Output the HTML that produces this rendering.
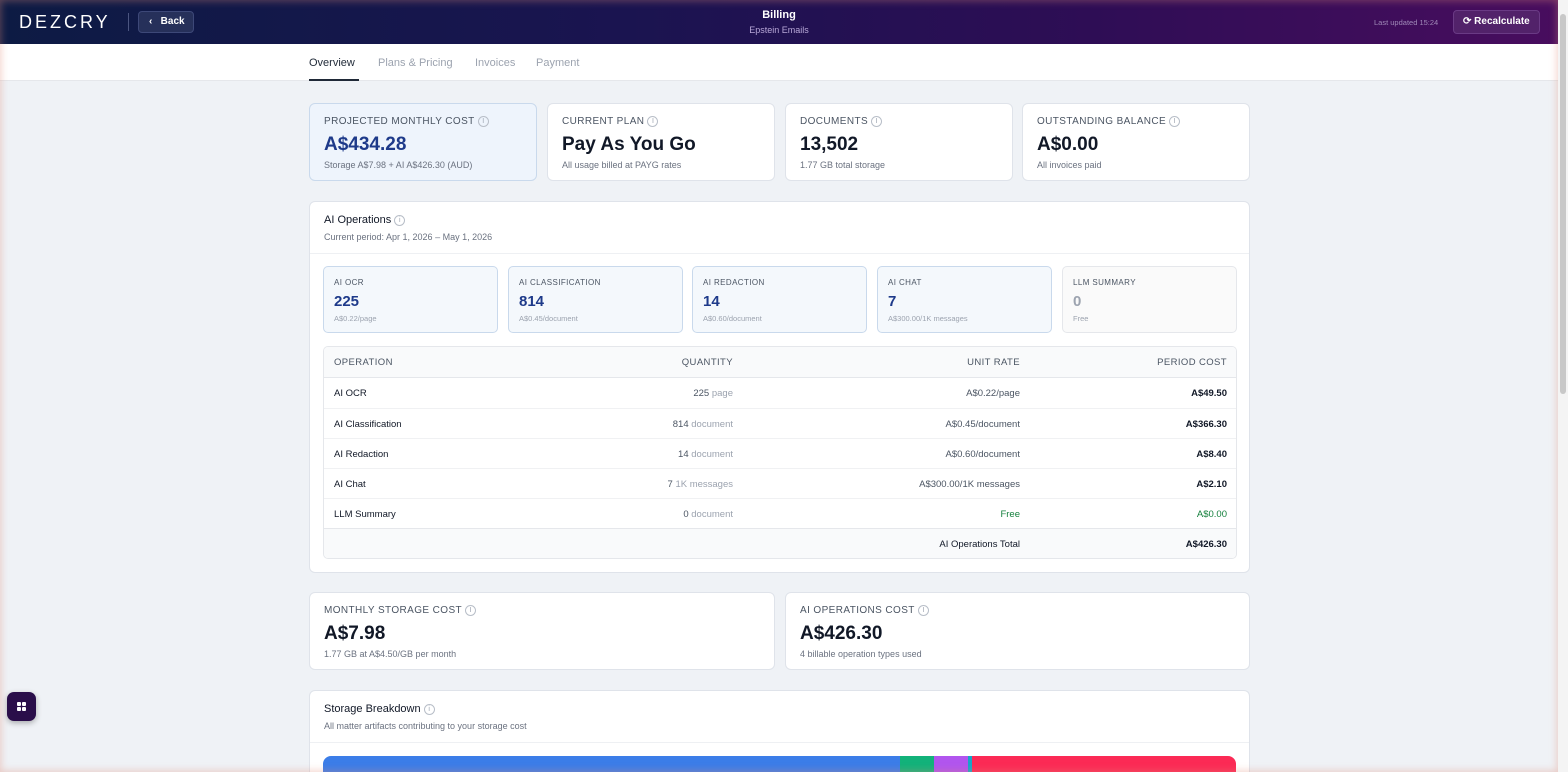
<!DOCTYPE html>
<html style="overflow:hidden;height:772px"><head><meta charset="utf-8"><style>
*{box-sizing:border-box;margin:0;padding:0}
body{width:1568px;height:772px;overflow:hidden;background:#eff2f6;font-family:"Liberation Sans",sans-serif;color:#111827;position:relative}
.hdr{position:absolute;left:0;top:0;width:1558px;height:44px;background:linear-gradient(90deg,#0d1b44 0%,#1a1450 40%,#2e0d55 70%,#480d5e 100%)}
.tabs{position:absolute;left:0;top:44px;width:1558px;height:37px;background:#fff;border-bottom:1px solid #e5e7eb}
.tab{position:absolute;top:13px;font-size:11px;color:#9ca3af}
.card{position:absolute;background:#fff;border:1px solid #dfe3ea;border-radius:6px}
.lbl{font-size:10px;letter-spacing:.4px;color:#4b5563;text-transform:uppercase;position:absolute;left:14px;top:12px}
.i{display:inline-block;width:11px;height:11px;border:1px solid #b8bec8;border-radius:50%;font-size:7px;line-height:9px;text-align:center;color:#9ca3af;vertical-align:1px;margin-left:3px;letter-spacing:0}
.big{position:absolute;left:14px;top:30px;font-size:19px;font-weight:bold}
.sub{position:absolute;left:14px;top:56px;font-size:9px;color:#6b7280}
.mini{position:absolute;top:266px;width:175px;height:67px;border:1px solid #c9d9ec;background:#f4f8fc;border-radius:5px}
.mini .t{position:absolute;left:10px;top:11px;font-size:8px;letter-spacing:.4px;color:#4b5563}
.mini .n{position:absolute;left:10px;top:26px;font-size:15px;font-weight:bold;color:#1e3a8a}
.mini .r{position:absolute;left:10px;top:47px;font-size:7.5px;color:#9ca3af}
.row{position:absolute;left:0;width:913px;height:30px;border-top:1px solid #f0f1f3;font-size:9.5px}
.row span{position:absolute;top:10px}
.c1{left:10px}.c2{right:504px}.c3{right:217px}.c4{right:10px;font-weight:bold}
.g{color:#9ca3af}
</style></head><body>
<div class="hdr">
 <div style="position:absolute;left:19px;top:12px;font-size:18px;color:#fff;letter-spacing:3px">DEZCRY</div>
 <div style="position:absolute;left:128px;top:13px;width:1px;height:18px;background:#4b5580"></div>
 <div style="position:absolute;left:138px;top:11px;width:56px;height:22px;border:1px solid #3d4878;background:#26305a;border-radius:4px;color:#fff;font-size:10px;font-weight:bold;line-height:20px;padding-left:10px">‹&nbsp;&nbsp;&nbsp;Back</div>
 <div style="position:absolute;left:0;width:1558px;top:9px;text-align:center;color:#fff;font-weight:bold;font-size:11px">Billing</div>
 <div style="position:absolute;left:0;width:1558px;top:25px;text-align:center;color:#b8a8d8;font-size:9px">Epstein Emails</div>
 <div style="position:absolute;left:1374px;top:18px;color:#a08ab8;font-size:7.5px">Last updated 15:24</div>
 <div style="position:absolute;left:1453px;top:10px;width:87px;height:24px;border:1px solid #6a3a85;background:#52226a;border-radius:4px;color:#fff;font-size:10px;font-weight:bold;line-height:22px;padding-left:9px">⟳ Recalculate</div>
</div>
<div class="tabs">
 <div class="tab" style="left:309px;color:#1f2937">Overview</div>
 <div style="position:absolute;left:309px;top:35px;width:50px;height:2px;background:#1f2937"></div>
 <div class="tab" style="left:378px">Plans &amp; Pricing</div>
 <div class="tab" style="left:475px">Invoices</div>
 <div class="tab" style="left:536px">Payment</div>
</div>

<div class="card" style="left:309px;top:103px;width:228px;height:78px;background:#eef4fc;border-color:#c9d9ec"><div class="lbl">Projected monthly cost<span class="i">i</span></div><div class="big" style="color:#1e3a8a">A$434.28</div><div class="sub">Storage A$7.98 + AI A$426.30 (AUD)</div></div>
<div class="card" style="left:547px;top:103px;width:228px;height:78px"><div class="lbl">Current plan<span class="i">i</span></div><div class="big">Pay As You Go</div><div class="sub">All usage billed at PAYG rates</div></div>
<div class="card" style="left:785px;top:103px;width:228px;height:78px"><div class="lbl">Documents<span class="i">i</span></div><div class="big">13,502</div><div class="sub">1.77 GB total storage</div></div>
<div class="card" style="left:1022px;top:103px;width:228px;height:78px"><div class="lbl">Outstanding balance<span class="i">i</span></div><div class="big">A$0.00</div><div class="sub">All invoices paid</div></div>

<div class="card" style="left:309px;top:201px;width:941px;height:372px">
 <div style="position:absolute;left:14px;top:12px;font-size:11px">AI Operations<span class="i">i</span></div>
 <div style="position:absolute;left:14px;top:30px;font-size:9px;color:#6b7280">Current period: Apr 1, 2026 – May 1, 2026</div>
 <div style="position:absolute;left:0;top:51px;width:939px;height:1px;background:#eef0f3"></div>
</div>
<div class="mini" style="left:323px"><div class="t">AI OCR</div><div class="n">225</div><div class="r">A$0.22/page</div></div>
<div class="mini" style="left:508px"><div class="t">AI CLASSIFICATION</div><div class="n">814</div><div class="r">A$0.45/document</div></div>
<div class="mini" style="left:692px"><div class="t">AI REDACTION</div><div class="n">14</div><div class="r">A$0.60/document</div></div>
<div class="mini" style="left:877px"><div class="t">AI CHAT</div><div class="n">7</div><div class="r">A$300.00/1K messages</div></div>
<div class="mini" style="left:1062px;background:#fafafa;border-color:#e5e7eb"><div class="t">LLM SUMMARY</div><div class="n" style="color:#9ca3af">0</div><div class="r">Free</div></div>

<div style="position:absolute;left:323px;top:346px;width:914px;height:213px;border:1px solid #e5e7eb;border-radius:5px;overflow:hidden;background:#fff">
 <div class="row" style="top:0;height:31px;background:#f9fafb;border:0;border-bottom:1px solid #e5e7eb;color:#4b5563;letter-spacing:.4px"><span class="c1">OPERATION</span><span class="c2">QUANTITY</span><span class="c3">UNIT RATE</span><span class="c4" style="font-weight:normal">PERIOD COST</span></div>
 <div class="row" style="top:31px;border:0"><span class="c1">AI OCR</span><span class="c2" style="color:#4b5563">225 <span class="g" style="position:static">page</span></span><span class="c3" style="color:#4b5563">A$0.22/page</span><span class="c4">A$49.50</span></div>
 <div class="row" style="top:61px"><span class="c1">AI Classification</span><span class="c2" style="color:#4b5563">814 <span class="g" style="position:static">document</span></span><span class="c3" style="color:#4b5563">A$0.45/document</span><span class="c4">A$366.30</span></div>
 <div class="row" style="top:91px"><span class="c1">AI Redaction</span><span class="c2" style="color:#4b5563">14 <span class="g" style="position:static">document</span></span><span class="c3" style="color:#4b5563">A$0.60/document</span><span class="c4">A$8.40</span></div>
 <div class="row" style="top:121px"><span class="c1">AI Chat</span><span class="c2" style="color:#4b5563">7 <span class="g" style="position:static">1K messages</span></span><span class="c3" style="color:#4b5563">A$300.00/1K messages</span><span class="c4">A$2.10</span></div>
 <div class="row" style="top:151px"><span class="c1">LLM Summary</span><span class="c2" style="color:#4b5563">0 <span class="g" style="position:static">document</span></span><span class="c3" style="color:#15803d">Free</span><span class="c4" style="color:#15803d;font-weight:normal">A$0.00</span></div>
 <div class="row" style="top:181px;height:32px;background:#f9fafb;border-top:1px solid #e5e7eb"><span class="c3">AI Operations Total</span><span class="c4">A$426.30</span></div>
</div>

<div class="card" style="left:309px;top:592px;width:466px;height:78px"><div class="lbl">Monthly storage cost<span class="i">i</span></div><div class="big">A$7.98</div><div class="sub">1.77 GB at A$4.50/GB per month</div></div>
<div class="card" style="left:785px;top:592px;width:465px;height:78px"><div class="lbl">AI operations cost<span class="i">i</span></div><div class="big">A$426.30</div><div class="sub">4 billable operation types used</div></div>

<div class="card" style="left:309px;top:690px;width:941px;height:82px;border-bottom:0;border-radius:6px 6px 0 0">
 <div style="position:absolute;left:14px;top:12px;font-size:11px">Storage Breakdown<span class="i">i</span></div>
 <div style="position:absolute;left:14px;top:30px;font-size:9px;color:#6b7280">All matter artifacts contributing to your storage cost</div>
 <div style="position:absolute;left:0;top:51px;width:939px;height:1px;background:#eef0f3"></div>
</div>
<div style="position:absolute;left:323px;top:756px;width:913px;height:16px;border-radius:8px 8px 0 0;overflow:hidden;display:flex">
 <div style="width:577px;background:#3b7de8"></div><div style="width:34px;background:#12b27a"></div><div style="width:34px;background:#b155ee"></div><div style="width:4px;background:#16a6c8"></div><div style="flex:1;background:#fb2a55"></div>
</div>

<div style="position:absolute;left:7px;top:692px;width:29px;height:29px;border-radius:7px;background:#2a0e4a;box-shadow:0 2px 6px rgba(0,0,0,.3)">
 <div style="position:absolute;left:10px;top:10px;width:4px;height:4px;background:#fff;box-shadow:5px 0 #fff,0 5px #fff,5px 5px #fff;border-radius:1px"></div>
</div>
<div style="position:absolute;left:1558px;top:0;width:10px;height:772px;background:#f4f4f4"><div style="position:absolute;left:2px;top:14px;width:6px;height:380px;background:#c8c8c8;border-radius:3px"></div></div>
<div style="position:absolute;left:0;top:0;width:1558px;height:772px;pointer-events:none;box-shadow:inset 0 0 8px 1px rgba(225,140,120,.4)"></div>
</body></html>
